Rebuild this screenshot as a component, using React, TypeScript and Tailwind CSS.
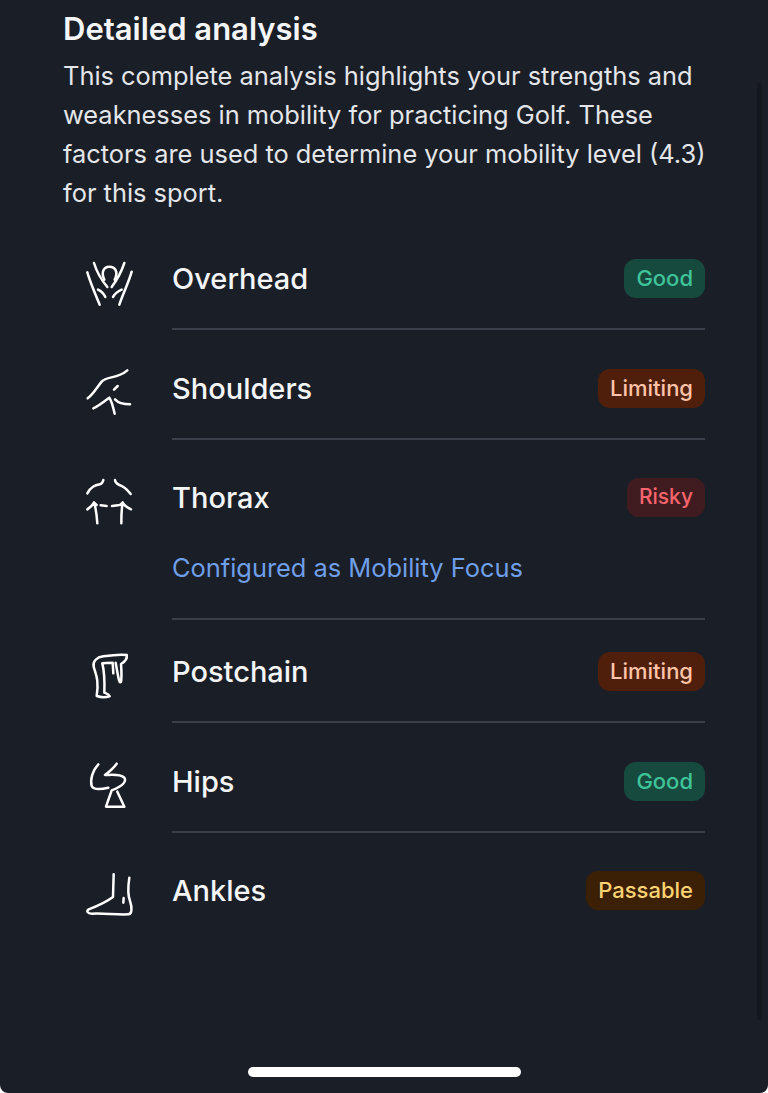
const font = "font-['Inter','Noto_Sans',sans-serif]";

type Status = "good" | "limiting" | "risky" | "passable";

const badgeStyles: Record<Status, { label: string; cls: string }> = {
  good: { label: "Good", cls: "bg-[#174a3e] text-[22px] text-[#3fc49a]" },
  limiting: { label: "Limiting", cls: "bg-[#4f1f0c] text-[22px] text-[#ffc4a8]" },
  risky: { label: "Risky", cls: "bg-[#401c20] text-[21px] text-[#f8646c]" },
  passable: { label: "Passable", cls: "bg-[#3b2005] text-[22px] text-[#fbd373]" },
};

function Icon({ box, children }: { box: string; children: React.ReactNode }) {
  return (
    <svg
      viewBox={box}
      fill="none"
      stroke="#fff"
      strokeWidth={7.5}
      strokeLinecap="round"
      strokeLinejoin="round"
      className="h-[56px] w-[56px] shrink-0"
    >
      {children}
    </svg>
  );
}

const OverheadIcon = () => (
  <Icon box="33 0 168 168">
    <path d="M52 64C60 92 74 125 89 161" />
    <path d="M185 62C176 95 160 125 148 161" />
    <path d="M72 36C80 62 95 88 112 108" />
    <path d="M163 36C155 60 140 88 125 108" />
    <path d="M103 86C92 62 102 47 118 47C135 47 146 62 134 86" />
    <path d="M84 116C93 120 101 128 106 138" />
    <path d="M155 116C145 120 135 128 129 138" />
  </Icon>
);

const ShouldersIcon = () => (
  <Icon box="33 330 168 168">
    <path d="M53 442C70 430 80 410 95 392C110 375 142 384 172 358" />
    <path d="M132 416L143 405" />
    <path d="M70 472C86 465 105 450 118 440C125 450 130 470 134 488" />
    <path d="M135 445C145 456 160 460 180 460" />
  </Icon>
);

const ThoraxIcon = () => (
  <Icon box="33 12 168 168">
    <path d="M52 82C62 62 75 58 90 55Q98 52 100 42" />
    <path d="M135 42Q136 52 148 57C165 62 172 72 182 84" />
    <path d="M52 130Q65 122 72 110Q79 130 82 172" />
    <path d="M72 110L80 117M92 118L110 120" />
    <path d="M183 130Q165 122 158 110Q154 130 154 172" />
    <path d="M126 120L144 118M150 117L158 110" />
  </Icon>
);

const PostchainIcon = () => (
  <Icon box="33 534 168 168">
    <path d="M170 567C150 564 120 568 100 571C80 574 68 585 71 602C76 622 88 640 80 690C92 694 108 694 119 691C116 684 108 682 103 680C104 650 104 620 97 592C108 590 118 590 128 590L130 622" />
    <path d="M170 567C173 580 160 590 153 594C154 610 156 630 153 648C147 652 146 640 137 590" />
  </Icon>
);

const HipsIcon = () => (
  <Icon box="33 9 168 168">
    <path d="M85 40C68 58 60 85 65 105C70 116 90 116 115 110" />
    <path d="M140 38C130 52 118 62 105 72C125 72 150 68 163 80C170 92 160 104 125 118L108 167H163L142 122" />
  </Icon>
);

const AnklesIcon = () => (
  <Icon box="33 336 168 168">
    <path d="M131 370L129 438C110 452 80 466 56 475C48 480 52 488 66 488C100 486 140 492 175 490C186 490 187 470 180 450C172 430 175 400 178 380" />
    <path d="M161 441L160 455" />
  </Icon>
);

const rows: { name: string; status: Status; icon: React.ReactNode; focus?: boolean; cls: string }[] = [
  { name: "Overhead", status: "good", icon: <OverheadIcon />, cls: "h-[110px] pt-[38px]" },
  { name: "Shoulders", status: "limiting", icon: <ShouldersIcon />, cls: "h-[110px] pt-[38px]" },
  { name: "Thorax", status: "risky", icon: <ThoraxIcon />, focus: true, cls: "h-[180px] pt-[37px]" },
  { name: "Postchain", status: "limiting", icon: <PostchainIcon />, cls: "h-[103px] pt-[31px]" },
  { name: "Hips", status: "good", icon: <HipsIcon />, cls: "h-[110px] pt-[38px]" },
  { name: "Ankles", status: "passable", icon: <AnklesIcon />, cls: "h-[110px] pt-[37px]" },
];

export default function App() {
  return (
    <div className={`${font} relative h-[1093px] w-[768px] overflow-hidden bg-white`}>
      <div className="h-full w-full rounded-b-[8px] bg-[#1a1e27] pl-[63px] pr-[63px] pt-[10px]">
        <h2 className="text-[31px] font-semibold leading-[38px] text-[#f4f5f6]">Detailed analysis</h2>
        <p className="mr-[-10px] mt-[8px] text-[25.4px] leading-[39px] text-[#e4e6e9]">
          This complete analysis highlights your strengths and weaknesses in mobility for practicing
          Golf. These factors are used to determine your mobility level (4.3) for this sport.
        </p>

        <div className="mt-[8px]">
          {rows.map((row, i) => {
            const badge = badgeStyles[row.status];
            return (
              <div key={row.name} className="flex">
                <div className={`w-[109px] shrink-0 ${row.cls}`}>
                  <div className="flex h-[40px] items-center pl-[18px] pt-[2px]">{row.icon}</div>
                </div>
                <div className={`flex-1 ${row.cls} ${i < rows.length - 1 ? "border-b-2 border-[#3a3f49]" : ""}`}>
                  <div className="flex h-[40px] items-center justify-between">
                    <span className="mt-[2px] text-[29px] font-medium text-[#f4f5f6]">{row.name}</span>
                    <span className={`flex h-[39px] items-center rounded-[12px] px-[12px] font-medium ${badge.cls}`}>
                      {badge.label}
                    </span>
                  </div>
                  {row.focus && (
                    <p className="mt-[31px] text-[25.4px] leading-[40px] text-[#6f9fe8]">Configured as Mobility Focus</p>
                  )}
                </div>
              </div>
            );
          })}
        </div>
      </div>

      <div className="absolute left-[757px] top-[83px] h-[937px] w-[5px] rounded-full bg-[#14171e]" />
      <div className="absolute bottom-[16px] left-[248px] h-[10px] w-[273px] rounded-full bg-white" />
    </div>
  );
}
